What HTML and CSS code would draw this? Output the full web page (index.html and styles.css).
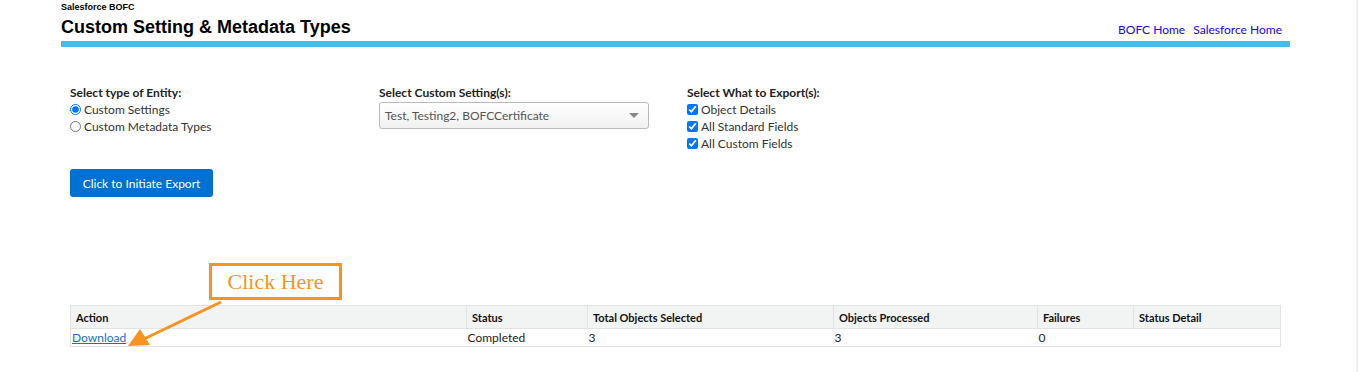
FILE: index.html
```html
<!DOCTYPE html>
<html lang="en">
<head>
  <meta charset="UTF-8">
  <title>Custom Setting &amp; Metadata Types</title>
  <link rel="stylesheet" href="styles.css">
</head>
<body>
  <div class="page">
    <div class="header">
      <div class="app-name">Salesforce BOFC</div>
      <div class="title-row">
        <h1>Custom Setting &amp; Metadata Types</h1>
        <div class="top-links">
          <a href="#">BOFC Home</a>
          <a href="#">Salesforce Home</a>
        </div>
      </div>
      <div class="bar"></div>
    </div>

    <div class="content">
      <div class="options">
        <div class="option-group">
          <div class="group-label">Select type of Entity:</div>
          <label class="choice"><input type="radio" name="entity" checked> Custom Settings</label>
          <label class="choice"><input type="radio" name="entity"> Custom Metadata Types</label>
        </div>
        <div class="option-group">
          <div class="group-label">Select Custom Setting(s):</div>
          <div class="select-box">
            <span>Test, Testing2, BOFCCertificate</span>
            <span class="caret"></span>
          </div>
        </div>
        <div class="option-group">
          <div class="group-label">Select What to Export(s):</div>
          <label class="choice"><input type="checkbox" checked> Object Details</label>
          <label class="choice"><input type="checkbox" checked> All Standard Fields</label>
          <label class="choice"><input type="checkbox" checked> All Custom Fields</label>
        </div>
      </div>

      <button class="export-btn">Click to Initiate Export</button>

      <div class="results">
        <!-- annotation over the table -->
        <div class="callout">Click Here</div>
        <svg class="arrow" width="100" height="50" viewBox="0 0 100 50">
          <line x1="95" y1="3" x2="18" y2="40" stroke="#f7931e" stroke-width="3"/>
          <polygon points="2,47 14,30 24,46" fill="#f7931e"/>
        </svg>

        <table>
          <thead>
            <tr>
              <th class="c-action">Action</th>
              <th class="c-status">Status</th>
              <th class="c-total">Total Objects Selected</th>
              <th class="c-proc">Objects Processed</th>
              <th class="c-fail">Failures</th>
              <th>Status Detail</th>
            </tr>
          </thead>
          <tbody>
            <tr>
              <td><a href="#">Download</a></td>
              <td>Completed</td>
              <td>3</td>
              <td>3</td>
              <td>0</td>
              <td></td>
            </tr>
          </tbody>
        </table>
      </div>
    </div>
  </div>
</body>
</html>
```

FILE: styles.css
```css
body {
  margin: 0;
  font-family: Lato, "Noto Sans", sans-serif;
  font-size: 12px;
  color: #222;
  background-color: #fff;
}
.page {
  min-height: 372px;
  box-sizing: border-box;
  border-right: 2px solid #f0f0f0;
  padding: 3px 0 0 61px;
  width: 1358px;
}
.header {
  width: 1229px;
}
.app-name {
  font-family: "Liberation Sans", Arial, sans-serif;
  font-weight: bold;
  font-size: 9px;
  line-height: 9px;
  color: #000;
}
.title-row {
  display: flex;
  justify-content: space-between;
  align-items: flex-end;
  height: 29px;
}
h1 {
  font-family: "Liberation Sans", Arial, sans-serif;
  font-size: 18px;
  font-weight: bold;
  color: #000;
  margin: 0 0 3px 0;
}
.top-links {
  padding-right: 8px;
  margin-bottom: 4px;
}
.top-links a {
  color: #2000ff;
  text-decoration: none;
  margin-left: 5px;
}
.bar {
  height: 6px;
  background-color: #45bde9;
}
.content {
  width: 1211px;
  padding: 37px 9px 0 9px;
}
.options {
  display: grid;
  grid-template-columns: 309px 308px auto;
}
.group-label {
  font-weight: bold;
  line-height: 17px;
  margin-bottom: 0;
}
.choice {
  display: flex;
  align-items: center;
  line-height: 17px;
  color: #333;
}
.choice input {
  margin: 0 3px 0 0;
  width: 11px;
  height: 11px;
}
.choice input[type="checkbox"] {
  accent-color: #0075ff;
}
.select-box {
  display: flex;
  justify-content: space-between;
  align-items: center;
  width: 270px;
  height: 27px;
  box-sizing: border-box;
  margin-top: 1px;
  padding: 0 9px 0 5px;
  border: 1px solid #bbb;
  border-radius: 3px;
  background: linear-gradient(#fff, #f1f1f1);
  color: #555;
}
.caret {
  width: 0;
  height: 0;
  border-left: 5px solid transparent;
  border-right: 5px solid transparent;
  border-top: 5px solid #888;
}
.export-btn {
  margin-top: 17px;
  width: 143px;
  height: 28px;
  border: none;
  border-radius: 3px;
  background-color: #0070d2;
  color: #fff;
  font-family: inherit;
  font-size: 12px;
}
.results {
  position: relative;
  margin-top: 108px;
}
.callout {
  position: absolute;
  left: 139px;
  top: -42px;
  width: 127px;
  height: 31px;
  border: 3px solid #f7931e;
  background-color: #fff;
  color: #f7931e;
  font-family: "Liberation Serif", "Times New Roman", serif;
  font-size: 22px;
  line-height: 31px;
  text-align: center;
}
.arrow {
  position: absolute;
  left: 56px;
  top: -6px;
}
table {
  width: 1211px;
  border-collapse: collapse;
  border: 1px solid #e2e3e3;
}
th {
  background-color: #f2f3f3;
  text-align: left;
  font-size: 11px;
  font-weight: bold;
  color: #111;
  height: 22px;
  padding: 0 5px;
  border-right: 1px solid #e2e3e3;
  border-bottom: 1px solid #e2e3e3;
}
td {
  height: 17px;
  padding: 0 1px;
  color: #222;
}
td a {
  color: #1c6ad6;
}
.c-action { width: 385px; }
.c-status { width: 110px; }
.c-total { width: 235px; }
.c-proc { width: 193px; }
.c-fail { width: 85px; }
```
